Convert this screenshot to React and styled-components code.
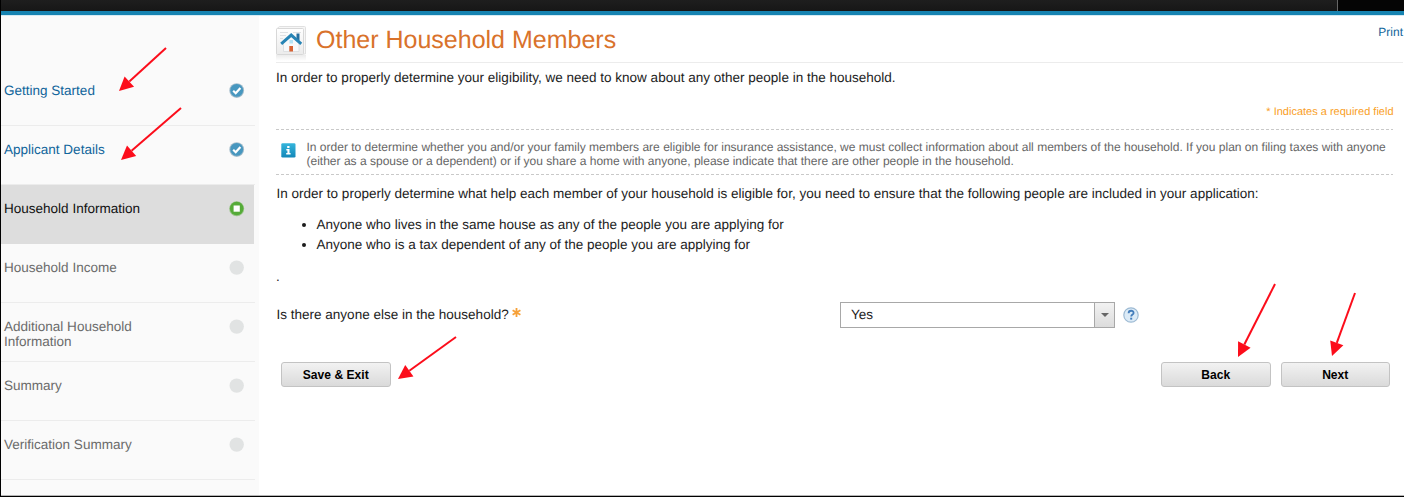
import React from 'react';
import styled, { createGlobalStyle } from 'styled-components';

const Global = createGlobalStyle`
  * { box-sizing: border-box; }
  body {
    margin: 0;
    background: #fff;
    color: #1c1c1c;
    font-family: "Liberation Sans", Arial, sans-serif;
    text-rendering: geometricPrecision;
    overflow: hidden;
  }
`;

const Page = styled.div`
  position: relative;
  display: flex;
  flex-direction: column;
  width: 1404px;
  height: 497px;
  border-left: 1px solid #000;
  border-bottom: 1px solid #000;
  box-shadow: inset 0 -1px 0 #b5b5b5;
`;

const TopBar = styled.header`
  flex: none;
  display: flex;
  justify-content: flex-end;
  height: 16px;
  background: linear-gradient(#1e1e1e, #141414);
  border-bottom: 1px solid #d3eaf4;
  box-shadow: inset 0 -4px 0 #1683b1;
`;

const TopBarEnd = styled.div`
  width: 67px;
  height: 11px;
  background: #050505;
  border-left: 1px solid #666;
`;

const Body = styled.div`
  flex: 1;
  display: flex;
  min-height: 0;
  padding-bottom: 1px;
`;

const Sidebar = styled.nav`
  flex: none;
  width: 258px;
  padding-top: 51px;
  background: #fafafa;
`;

const Step = styled.div`
  display: flex;
  justify-content: space-between;
  align-items: flex-start;
  width: ${(p) => (p.$state === 'current' ? 253 : 254)}px;
  height: 59px;
  padding: 16px ${(p) => (p.$state === 'current' ? 9 : 10)}px 0 3px;
  border-bottom: 1px solid ${(p) => (p.$state === 'current' ? '#dddddd' : '#ececec')};
  background: ${(p) => (p.$state === 'current' ? '#dddddd' : 'transparent')};
  color: ${(p) => ({ done: '#11659b', current: '#111', todo: '#6b6b6b' })[p.$state]};
  font-size: 13.53px;
  line-height: 15px;
`;

const StepLabel = styled.span`
  width: 165px;
`;

const StatusSvg = styled.svg`
  flex: none;
  width: 16px;
  height: 16px;
`;

const Content = styled.main`
  flex: 1;
  display: flex;
  flex-direction: column;
  padding-left: 17px;
  min-width: 0;
`;

const TitleRow = styled.div`
  display: flex;
  align-items: flex-start;
  height: 47px;
  margin-right: 1px;
  padding-top: 10px;
  border-bottom: 1px solid #ececec;
`;

const TitleIcon = styled.svg`
  width: 30px;
  height: 35px;
`;

const Title = styled.h1`
  flex: 1;
  margin: -2px 0 0 10px;
  color: #d9722b;
  font-size: 25px;
  font-weight: 400;
  line-height: 32px;
  white-space: nowrap;
`;

const PrintLink = styled.a`
  margin-top: -1px;
  color: #11659b;
  font-size: 12px;
  line-height: 14px;
`;

const Text = styled.p`
  margin: ${(p) => p.$m};
  font-size: 13.53px;
  line-height: 16px;
  white-space: nowrap;
`;

const RequiredNote = styled.div`
  margin: 19px 10.5px 0 0;
  color: #f9a01f;
  font-size: 11px;
  line-height: 14px;
  text-align: right;
`;

const Notice = styled.div`
  display: flex;
  height: 46px;
  margin: 10px 11px 0 0;
  padding: 11px 0 0 5px;
  gap: 10.5px;
  color: #666;
  font-size: 12.02px;
  line-height: 14px;
  white-space: nowrap;
  background:
    repeating-linear-gradient(90deg, #c9c9c9 0 3px, transparent 3px 5px) top / 100% 1px no-repeat,
    repeating-linear-gradient(90deg, #c9c9c9 0 3px, transparent 3px 5px) bottom / 100% 1px no-repeat;
`;

const InfoSvg = styled.svg`
  flex: none;
  width: 15px;
  height: 15px;
  margin-top: 3px;
`;

const People = styled.ul`
  margin: 13px 0 0;
  padding-left: 40.5px;
  font-size: 13.53px;
  line-height: 20px;
`;

const Question = styled.div`
  display: flex;
  align-items: center;
  height: 26px;
  margin-top: 17px;
  font-size: 13.53px;
`;

const QuestionLabel = styled.label`
  display: flex;
  align-items: center;
  gap: 3px;
  width: 564px;
  padding: 0 0 2px 0.5px;
  white-space: nowrap;
`;

const StarSvg = styled.svg`
  width: 9px;
  height: 9px;
  margin-top: -3px;
`;

const Select = styled.div`
  display: flex;
  align-items: stretch;
  width: 275px;
  height: 26px;
  border: 1px solid #a8a8a8;
  background: #fff;
  line-height: 23px;
`;

const SelectValue = styled.span`
  flex: 1;
  padding-left: 10px;
`;

const SelectArrow = styled.span`
  display: flex;
  align-items: center;
  justify-content: center;
  width: 20px;
  border-left: 1px solid #a8a8a8;
  background: linear-gradient(#f2f2f2, #dcdcdc);

  &::after {
    content: '';
    border: 4px solid transparent;
    border-top-color: #666;
    border-bottom: 0;
  }
`;

const HelpSvg = styled.svg`
  width: 16px;
  height: 16px;
  margin: 0 0 1px 8px;
`;

const Actions = styled.div`
  display: flex;
  gap: 10px;
  margin: 34px 14px 0 5px;
`;

const Button = styled.button`
  width: 109.5px;
  height: 25px;
  margin-right: ${(p) => (p.$first ? 'auto' : 0)};
  padding: 1px 0 0;
  border: 1px solid #c3c3c3;
  border-radius: 3px;
  background: linear-gradient(#f2f2f2, #dadada);
  color: #000;
  font: bold 12.1px "Liberation Sans", Arial, sans-serif;
`;

const Annotations = styled.svg`
  position: absolute;
  top: 0;
  left: -1px;
  width: 1404px;
  height: 497px;
  pointer-events: none;
`;

const steps = [
  ['Getting Started', 'done'],
  ['Applicant Details', 'done'],
  ['Household Information', 'current'],
  ['Household Income', 'todo'],
  ['Additional Household Information', 'todo'],
  ['Summary', 'todo'],
  ['Verification Summary', 'todo'],
];

// Each arrow: tail x/y, head x/y
const arrows = [
  [166, 48, 119, 91],
  [181, 108, 121, 160],
  [456, 337, 398, 379],
  [1275, 284, 1238, 357],
  [1355, 293, 1332, 356],
];

function Status({ state }) {
  return (
    <StatusSvg viewBox="0 0 16 16">
      {state === 'todo' && <circle cx="7.7" cy="7.6" r="7.2" fill="#e1e3e3" />}
      {state === 'done' && (
        <>
          <circle cx="7.7" cy="7.6" r="7.4" fill="#a3bccb" />
          <circle cx="7.7" cy="7.4" r="6.4" fill="#4797bf" />
          <path d="M4.2 7.8l2.5 2.4 4.7-5.3" fill="none" stroke="#fff" strokeWidth="2.2" />
        </>
      )}
      {state === 'current' && (
        <>
          <circle cx="7.7" cy="7.8" r="7.5" fill="#98c487" />
          <circle cx="7.7" cy="7.5" r="6.8" fill="#55ab38" />
          <rect x="4.6" y="4.5" width="6.2" height="6.2" fill="#fff" />
        </>
      )}
    </StatusSvg>
  );
}

function Arrow({ points: [x1, y1, x2, y2] }) {
  const len = Math.hypot(x2 - x1, y2 - y1);
  const ux = (x2 - x1) / len;
  const uy = (y2 - y1) / len;
  const bx = x2 - ux * 14;
  const by = y2 - uy * 14;
  return (
    <g fill="#fc0d1b" stroke="none">
      <line x1={x1} y1={y1} x2={bx} y2={by} stroke="#fc0d1b" strokeWidth="2" />
      <polygon points={`${x2},${y2} ${bx - uy * 7},${by + ux * 7} ${bx + uy * 7},${by - ux * 7}`} />
    </g>
  );
}

export default function App() {
  return (
    <Page>
      <Global />
      <TopBar><TopBarEnd /></TopBar>
      <Body>
        <Sidebar>
          {steps.map(([label, state]) => (
            <Step key={label} $state={state}>
              <StepLabel>{label}</StepLabel>
              <Status state={state} />
            </Step>
          ))}
        </Sidebar>
        <Content>
          <TitleRow>
            <TitleIcon viewBox="0 0 30 35">
              <defs>
                <linearGradient id="paper" x2="0" y2="1">
                  <stop offset="0" stopColor="#fff" />
                  <stop offset="1" stopColor="#ebebeb" />
                </linearGradient>
                <linearGradient id="reflection" x2="0" y2="1">
                  <stop offset="0" stopColor="#ececec" />
                  <stop offset="1" stopColor="#fff" />
                </linearGradient>
              </defs>
              <rect x="0" y="29" width="30" height="6" fill="url(#reflection)" />
              <path d="M3.5.5h25q1 0 1 1V28H.5V3z" fill="#f6f6f6" stroke="#e0e0e0" />
              <rect x=".5" y="2.5" width="27" height="26" rx="1" fill="url(#paper)" stroke="#d8d8d8" />
              <path d="M4 6.5h8M17 6.5h8M4 9.5h6M4 12.5h3" stroke="#dfe1e3" />
              <path d="M7.5 17l7.700-7 7.800 7v8.500h-15.500z" fill="#f8f9fa" stroke="#d8dadd" strokeWidth=".8" />
              <path d="M20.500 7.500h3v7h-3z" fill="#276f9f" />
              <path d="M5.200 17.800L15.200 9l10 8.800" fill="none" stroke="#2784b5" strokeWidth="3" />
              <rect x="13.500" y="14" width="3.500" height="3.500" fill="#b5e3f5" />
              <rect x="13.300" y="20" width="3.700" height="5.500" fill="#d76334" />
            </TitleIcon>
            <Title>Other Household Members</Title>
            <PrintLink>Print</PrintLink>
          </TitleRow>
          <Text $m="7px 0 0">
            In order to properly determine your eligibility, we need to know about any other people in the household.
          </Text>
          <RequiredNote>* Indicates a required field</RequiredNote>
          <Notice>
            <InfoSvg viewBox="0 0 15 15">
              <defs>
                <linearGradient id="info" x2="0" y2="1">
                  <stop offset="0" stopColor="#35b5dc" />
                  <stop offset="1" stopColor="#1387b8" />
                </linearGradient>
              </defs>
              <rect x=".3" y=".3" width="14.2" height="14.2" rx="1.3" fill="url(#info)" />
              <path d="M6.2 3h2.300v2H6.200zM5.300 6h3.200v4h1.100v1.500H5.200V10h1.200V7.400H5.300z" fill="#fff" />
            </InfoSvg>
            <div>
              In order to determine whether you and/or your family members are eligible for insurance assistance, we must collect information about all members of the household. If you plan on filing taxes with anyone
              <br />
              (either as a spouse or a dependent) or if you share a home with anyone, please indicate that there are other people in the household.
            </div>
          </Notice>
          <Text $m="11px 0 0 .5px">
            In order to properly determine what help each member of your household is eligible for, you need to ensure that the following people are included in your application:
          </Text>
          <People>
            <li>Anyone who lives in the same house as any of the people you are applying for</li>
            <li>Anyone who is a tax dependent of any of the people you are applying for</li>
          </People>
          <Text $m="14px 0 0">.</Text>
          <Question>
            <QuestionLabel>
              Is there anyone else in the household?
              <StarSvg viewBox="0 0 9 9">
                <path d="M4.5 0v9M.6 2.250l7.800 4.500M.6 6.750l7.800-4.500" stroke="#f6a037" strokeWidth="1.8" />
              </StarSvg>
            </QuestionLabel>
            <Select>
              <SelectValue>Yes</SelectValue>
              <SelectArrow />
            </Select>
            <HelpSvg viewBox="0 0 16 16">
              <circle cx="8" cy="8" r="7.2" fill="#dcebf7" stroke="#9dbad3" strokeWidth="1.2" />
              <path d="M5.6 6.200c0-3.300 5-3.100 5-.3 0 1.700-2.400 1.700-2.400 3.600" fill="none" stroke="#437dbb" strokeWidth="1.8" />
              <rect x="7.2" y="10.7" width="2" height="1.9" fill="#437dbb" />
            </HelpSvg>
          </Question>
          <Actions>
            <Button $first>Save &amp; Exit</Button>
            <Button>Back</Button>
            <Button>Next</Button>
          </Actions>
        </Content>
      </Body>
      <Annotations viewBox="0 0 1404 497">
        {arrows.map((a) => <Arrow key={a.join()} points={a} />)}
      </Annotations>
    </Page>
  );
}
